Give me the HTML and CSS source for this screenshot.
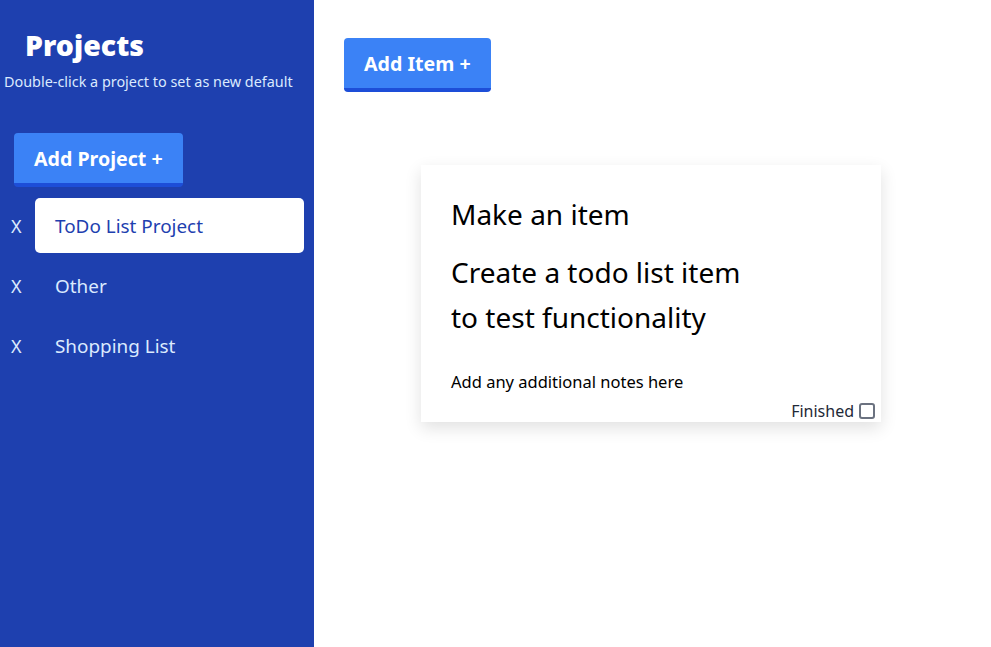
FILE: index.html
```html
<!DOCTYPE html>
<html lang="en">
<head>
<meta charset="utf-8">
<title>Todo</title>
<link rel="stylesheet" href="styles.css">
</head>
<body>
<aside class="sidebar">
  <h1 class="sidebar-title">Projects</h1>
  <p class="sidebar-hint">Double-click a project to set as new default</p>
  <button class="btn btn-project">Add Project +</button>
  <ul class="project-list">
    <li class="project-row"><span class="project-del">X</span><span class="project-name active">ToDo List Project</span></li>
    <li class="project-row"><span class="project-del">X</span><span class="project-name">Other</span></li>
    <li class="project-row"><span class="project-del">X</span><span class="project-name">Shopping List</span></li>
  </ul>
</aside>
<main class="content">
  <button class="btn btn-item">Add Item +</button>
  <section class="card">
    <h2 class="card-title">Make an item</h2>
    <p class="card-desc">Create a todo list item<br>to test functionality</p>
    <p class="card-notes">Add any additional notes here</p>
    <label class="card-finished">Finished <span class="checkbox"></span></label>
  </section>
</main>
</body>
</html>
```

FILE: styles.css
```css
* { box-sizing: border-box; }
html, body { margin: 0; height: 100%; }
body {
  display: flex;
  font-family: "Noto Sans", "Open Sans", sans-serif;
  background: #ffffff;
}
.sidebar {
  width: 314px;
  flex-shrink: 0;
  background: #1e40af;
  color: #dbeafe;
  padding-top: 26px;
}
.sidebar-title {
  margin: 0 0 0 25px;
  font-size: 28.5px;
  font-weight: 900;
  color: #ffffff;
  line-height: 38px;
}
.sidebar-hint {
  margin: 8px 0 0 4px;
  font-size: 14.4px;
  line-height: 20px;
}
.btn {
  display: block;
  border: 0;
  border-bottom: 4px solid #1d4ed8;
  border-radius: 4px;
  background: #3b82f6;
  color: #ffffff;
  font-family: inherit;
  font-size: 19.6px;
  font-weight: 700;
  height: 54px;
  padding: 0 20px;
}
.btn-project { margin: 41px 0 0 14px; }
.project-list {
  list-style: none;
  margin: 11px 0 0 0;
  padding: 0;
}
.project-row {
  display: flex;
  align-items: center;
  height: 55px;
  margin-bottom: 5px;
}
.project-del {
  width: 35px;
  padding-left: 11px;
  font-size: 18px;
}
.project-name {
  flex: 0 0 269px;
  height: 55px;
  display: flex;
  align-items: center;
  padding-left: 20px;
  font-size: 18.9px;
  border-radius: 5px;
}
.project-name.active {
  background: #ffffff;
  color: #1e40af;
}
.content {
  flex: 1;
  padding: 38px 0 0 30px;
}
.card {
  margin: 73px 0 0 77px;
  width: 460px;
  height: 257px;
  background: #ffffff;
  box-shadow: 0 6px 16px rgba(0, 0, 0, 0.12);
  padding: 30px 6px 0 30px;
  color: #000000;
  display: flex;
  flex-direction: column;
}
.card-title {
  margin: 0;
  font-size: 28px;
  font-weight: 400;
  line-height: 38px;
}
.card-desc {
  margin: 17px 0 0 0;
  font-size: 28px;
  line-height: 45px;
}
.card-notes {
  margin: 30px 0 0 0;
  font-size: 16.5px;
  line-height: 24px;
}
.card-finished {
  align-self: flex-end;
  display: flex;
  align-items: center;
  gap: 5px;
  font-size: 16px;
  line-height: 22px;
  color: #1f2937;
  margin-top: 6px;
}
.checkbox {
  width: 16px;
  height: 16px;
  border: 2px solid #6b7280;
  border-radius: 3px;
}
```
